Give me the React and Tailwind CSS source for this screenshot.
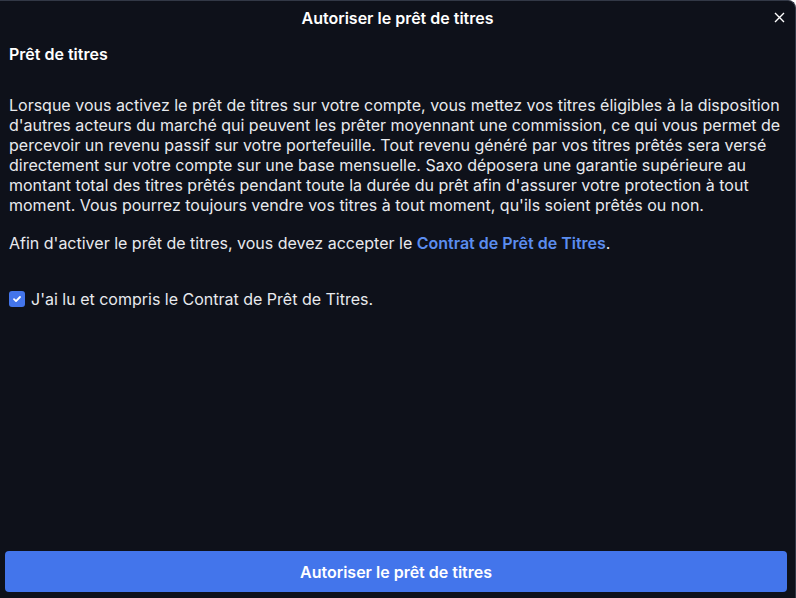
export default function App() {
  return (
    <div
      className="w-[796px] h-[598px] bg-[#0e111a] text-[#e8eaee] flex flex-col border-t border-r border-[#323846] rounded-tr-lg overflow-hidden"
      style={{ fontFamily: 'Inter, "Noto Sans", sans-serif' }}
    >
      <header className="relative h-[34px] flex items-center justify-center shrink-0">
        <h1 className="text-[16px] font-semibold text-white">Autoriser le prêt de titres</h1>
        <button className="absolute right-[10px] top-[11px] text-white">
          <svg width="11" height="11" viewBox="0 0 11 11" fill="none" stroke="currentColor" strokeWidth="1.4">
            <path d="M1 1l9 9M10 1l-9 9" />
          </svg>
        </button>
      </header>
      <main className="flex-1 px-[9px] pt-[9px] text-[16px] leading-[20px]">
        <h2 className="font-semibold text-white">Prêt de titres</h2>
        <p className="mt-[31px]">
          Lorsque vous activez le prêt de titres sur votre compte, vous mettez vos titres éligibles à la disposition
          d'autres acteurs du marché qui peuvent les prêter moyennant une commission, ce qui vous permet de
          percevoir un revenu passif sur votre portefeuille. Tout revenu généré par vos titres prêtés sera versé
          directement sur votre compte sur une base mensuelle. Saxo déposera une garantie supérieure au
          montant total des titres prêtés pendant toute la durée du prêt afin d'assurer votre protection à tout
          moment. Vous pourrez toujours vendre vos titres à tout moment, qu'ils soient prêtés ou non.
        </p>
        <p className="mt-[18px]">
          Afin d'activer le prêt de titres, vous devez accepter le{' '}
          <a className="text-[#5b8def] font-semibold">Contrat de Prêt de Titres</a>.
        </p>
        <label className="mt-[36px] flex items-center gap-[6px]">
          <span className="w-[16px] h-[16px] rounded-[3px] bg-[#4375eb] flex items-center justify-center">
            <svg width="10" height="10" viewBox="0 0 10 10" fill="none" stroke="white" strokeWidth="1.8" strokeLinecap="round" strokeLinejoin="round">
              <path d="M2 5.2l2 1.9L8 3" />
            </svg>
          </span>
          <span>J'ai lu et compris le Contrat de Prêt de Titres.</span>
        </label>
      </main>
      <footer className="px-[5px] pb-[6px] pt-[4px] shrink-0">
        <button className="w-[782px] h-[41px] rounded-[4px] bg-[#4375eb] text-white text-[16px] font-semibold">
          Autoriser le prêt de titres
        </button>
      </footer>
    </div>
  );
}
